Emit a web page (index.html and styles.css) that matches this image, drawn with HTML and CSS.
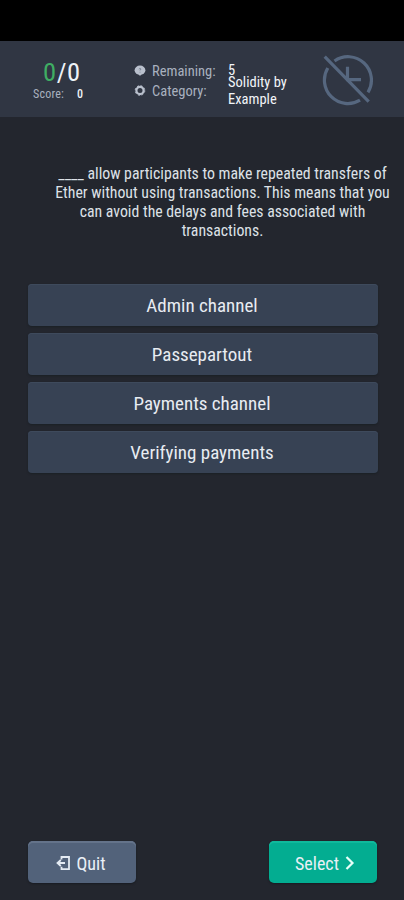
FILE: index.html
```
<!DOCTYPE html>
<html lang="en">
<head>
<meta charset="utf-8">
<title>Quiz</title>
<link rel="stylesheet" href="styles.css">
</head>
<body>
<div class="app">
  <div class="statusbar"></div>
  <header class="header">
    <div class="score">
      <div class="tally"><span class="good">0</span>/0</div>
      <div class="points"><span>Score:</span><b>0</b></div>
    </div>
    <div class="labels">
      <div class="label"><svg width="12" height="12" viewBox="0 0 12 12"><ellipse cx="6" cy="5.2" rx="5.4" ry="4.6" fill="#b9c0cd"/><path d="M4 8.500h4L6 11z" fill="#b9c0cd"/><path d="M4.8 4.2Q6 2.8 7 4L6 5.500M6 6.800v.8" stroke="#7b8493" fill="none"/></svg><span>Remaining:</span></div>
      <div class="label"><svg width="12" height="12" viewBox="0 0 12 12"><circle cx="6" cy="5.500" r="3.6" fill="none" stroke="#b9c0cd" stroke-width="2.2"/><circle cx="6" cy="5.500" r="4.8" fill="none" stroke="#b9c0cd" stroke-width="1" stroke-dasharray="2 1.77"/></svg><span>Category:</span></div>
    </div>
    <div class="values">
      <div class="count">5</div>
      <div class="category">Solidity by<br>Example</div>
    </div>
    <svg class="timer" width="52" height="52" viewBox="0 0 52 52" fill="none" stroke="#56677f" stroke-width="3.2"><path d="M12.500 7A23.400 23.400 0 0 1 46 38.300M38 46.100A23.400 23.400 0 0 1 5.800 14M25.500 12.700V25.700H39M2.700 2.700L46.700 47.700"/></svg>
  </header>
  <main class="main">
    <p class="question">____ allow participants to make repeated transfers of<br>Ether without using transactions. This means that you<br>can avoid the delays and fees associated with<br>transactions.</p>
    <div class="options">
      <button class="option">Admin channel</button>
      <button class="option">Passepartout</button>
      <button class="option">Payments channel</button>
      <button class="option">Verifying payments</button>
    </div>
  </main>
  <footer class="footer">
    <button class="action quit"><svg width="16" height="16" viewBox="0 0 16 16" fill="none" stroke="#e4ebf3" stroke-width="1.8"><path d="M6.500 4.500V2H14v12.200H6.500v-2.500M10 8H3M5.800 5L2.500 8l3.300 3"/></svg><span>Quit</span></button>
    <button class="action select"><span>Select</span><svg width="10" height="14" viewBox="0 0 10 14" fill="none" stroke="#e6fff8" stroke-width="2.2"><path d="M1.500 1L7.500 7l-6 6"/></svg></button>
  </footer>
</div>
</body>
</html>
```
FILE: styles.css
```
* { box-sizing: border-box; }
body {
  margin: 0;
  background: #23262e;
  font-family: "Roboto Condensed", Roboto, sans-serif;
  font-stretch: 75%;
}
.app { width: 404px; height: 900px; display: flex; flex-direction: column; }
.statusbar { height: 41px; background: #000; }
.header { height: 76px; background: #303643; display: flex; }
.score { width: 134px; padding: 17px 0 0 33px; color: #eef2f7; }
.tally { font-size: 26.500px; line-height: 28px; padding-left: 10px; letter-spacing: .6px; }
.good { color: #3fae63; }
.points { display: flex; gap: 13px; font-size: 12px; line-height: 17px; letter-spacing: .2px; color: #a9b1bf; }
.points b { font-weight: 500; color: #eef2f7; }
.labels { width: 94px; padding-top: 20px; }
.label { display: flex; align-items: center; gap: 6px; height: 20px; font-size: 14.5px; color: #a9b1bf; }
.values { width: 94px; padding-top: 21px; font-size: 14.5px; line-height: 17px; color: #f2f5f9; }
.category { margin-top: -5px; }
.timer { margin-top: 13px; }
.main { flex: 1; }
.question { margin: 47px 0 0 41px; width: 363px; text-align: center; font-size: 15.8px; line-height: 19px; color: #dde1e7; }
.options { margin: 44px 26px 0 28px; display: flex; flex-direction: column; gap: 7px; }
button { font: inherit; border: 0; padding: 0; display: flex; align-items: center; justify-content: center; }
.option { height: 42px; padding-right: 2px; border-radius: 4px; background: #374254; color: #e8ecf2; font-size: 19px; box-shadow: inset 0 1px #3e4a5c, 0 1px 2px #1b2025; }
.footer { display: flex; justify-content: space-between; padding: 0 27px 17px 28px; }
.action { width: 108px; height: 42px; border-radius: 5px; font-size: 18px; color: #eaf0f6; }
.quit { gap: 6px; padding: 2px 4px 0 0; background: #52627a; box-shadow: inset 0 2px #64738a, 0 1px 2px #181b22; }
.select { gap: 6px; padding: 2px 0 0 4px; background: #03ad91; box-shadow: inset 0 2px #10b99c, 0 1px 2px #181b22; }
```
